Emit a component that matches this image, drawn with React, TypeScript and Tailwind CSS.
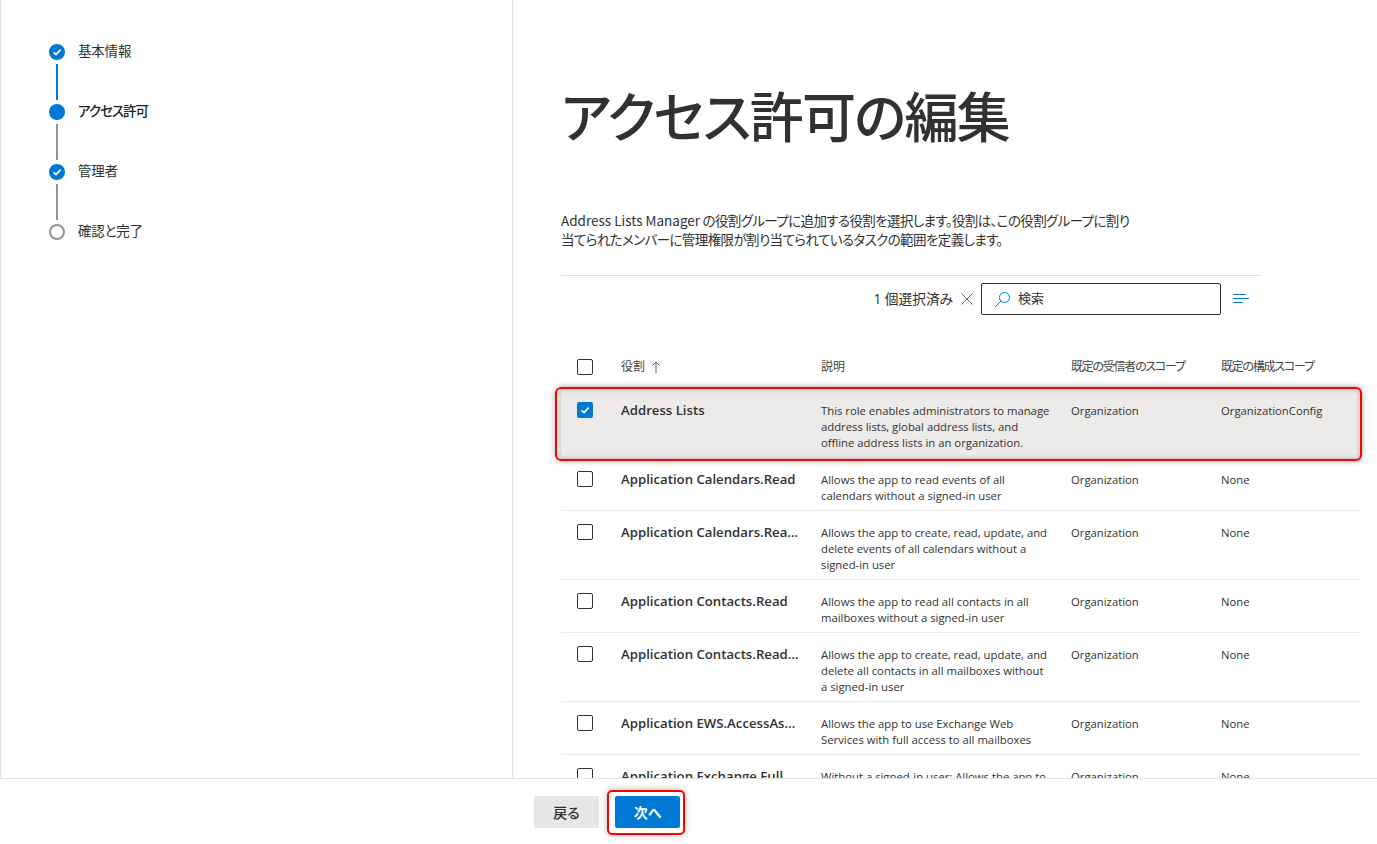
import React from "react";

type Row = { name: string; desc: string[]; conf?: string; selected?: boolean };
const rows: Row[] = [
  { name: "Address Lists", desc: ["This role enables administrators to manage", "address lists, global address lists, and", "offline address lists in an organization."], conf: "OrganizationConfig", selected: true },
  { name: "Application Calendars.Read", desc: ["Allows the app to read events of all", "calendars without a signed-in user"] },
  { name: "Application Calendars.ReadWrite", desc: ["Allows the app to create, read, update, and", "delete events of all calendars without a", "signed-in user"] },
  { name: "Application Contacts.Read", desc: ["Allows the app to read all contacts in all", "mailboxes without a signed-in user"] },
  { name: "Application Contacts.ReadWrite", desc: ["Allows the app to create, read, update, and", "delete all contacts in all mailboxes without", "a signed-in user"] },
  { name: "Application EWS.AccessAsApp", desc: ["Allows the app to use Exchange Web", "Services with full access to all mailboxes"] },
  { name: "Application Exchange Full Access", desc: ["Without a signed-in user: Allows the app to", "have full access"] },
];

function Check({ size = 10 }: { size?: number }) {
  return (
    <svg width={size} height={size} viewBox="0 0 10 10" fill="none">
      <path d="M1.5 5.3 L4 7.6 L8.6 2.6" stroke="white" strokeWidth="1.6" />
    </svg>
  );
}

function Step({ label, state, active, tight }: { label: string; state: "done" | "current" | "todo"; active?: boolean; tight?: boolean }) {
  return (
    <div className="flex items-center h-4">
      {state === "todo" ? (
        <span className="w-4 h-4 rounded-full border-2 border-[#949494] bg-white" />
      ) : (
        <span className="w-4 h-4 rounded-full bg-[#0078d4] flex items-center justify-center">
          {state === "done" && <Check />}
        </span>
      )}
      <span className={`ml-[13px] -mt-[2px] text-[13.5px] leading-4 ${tight ? "tracking-[-1px]" : "tracking-[-0.2px]"} ${active ? "text-[#201f1e] font-medium" : "text-[#323130]"}`}>{label}</span>
    </div>
  );
}

function Connector({ blue }: { blue?: boolean }) {
  return <div className={`ml-[7px] my-1 w-[2px] h-9 ${blue ? "bg-[#0078d4]" : "bg-[#949494]"}`} />;
}

function Box({ checked }: { checked?: boolean }) {
  return checked ? (
    <span className="w-4 h-4 rounded-[2px] bg-[#0078d4] flex items-center justify-center"><Check /></span>
  ) : (
    <span className="block w-4 h-4 rounded-[2px] border border-[#323130] bg-white" />
  );
}

export default function App() {
  return (
    <div className="relative w-[1377px] h-[844px] overflow-hidden bg-white flex flex-col text-[#323130] font-['Open_Sans','Noto_Sans_CJK_JP',sans-serif] [font-feature-settings:'palt']">
      <div className="flex-1 min-h-0 flex">
        <aside className="w-[513px] shrink-0 border-l border-r border-[#e1e1e1] pl-[48px] pt-[44px]">
          <Step label="基本情報" state="done" />
          <Connector blue />
          <Step label="アクセス許可" state="current" active tight />
          <Connector />
          <Step label="管理者" state="done" />
          <Connector />
          <Step label="確認と完了" state="todo" />
        </aside>
        <main className="flex-1 min-w-0 overflow-hidden pl-[48px]">
          <h1 className="mt-[78px] h-[74px] text-[54px] leading-[74px] tracking-[-1.8px] font-medium text-[#323130] font-['Noto_Sans_CJK_JP',sans-serif] whitespace-nowrap">アクセス許可の編集</h1>
          <p className="mt-[59px] w-[600px] text-[13.5px] leading-[19px] tracking-[-0.6px] text-[#323130] font-['Noto_Sans_CJK_JP',sans-serif] whitespace-nowrap">
            <span className="tracking-normal">Address Lists Manager</span> の役割グループに追加する役割を選択します。役割は、この役割グループに割り<br />
            当てられたメンバーに管理権限が割り当てられているタスクの範囲を定義します。
          </p>
          <div className="mt-[26px] w-[700px] border-t border-[#e1dfdd] h-[40px] pt-[7px] flex items-center justify-end">
            <span className="text-[13.7px] mr-2 whitespace-nowrap">1 個選択済み</span>
            <svg width="12" height="12" viewBox="0 0 12 12" className="mr-2" fill="none"><path d="M0.5 0.5 L11.5 11.5 M11.5 0.5 L0.5 11.5" stroke="#605e5c" strokeWidth="1" /></svg>
            <div className="w-[240px] h-[32px] border border-[#323130] rounded-[2px] flex items-center pl-[12px] text-[13px]">
              <svg width="17" height="17" viewBox="0 0 17 17" fill="none"><circle cx="10.5" cy="6.5" r="5" stroke="#0078d4" strokeWidth="1" /><path d="M7 10 L1 16" stroke="#0078d4" strokeWidth="1" /></svg>
              <span className="ml-[7px]">検索</span>
            </div>
            <svg width="16" height="10" viewBox="0 0 16 10" className="ml-3 mr-[12px]" fill="none"><path d="M0 0.5 H13 M0 4.5 H16 M0 8.5 H10" stroke="#0078d4" strokeWidth="1" /></svg>
          </div>
          <div className="mt-[36px] w-[799px]">
            <div className="flex items-center h-[32px] mb-[6px] text-[12px] text-[#484644]">
              <div className="w-[60px] pl-4"><Box /></div>
              <div className="w-[200px] flex items-center">役割<svg width="10" height="12" viewBox="0 0 10 12" className="ml-[6px]" fill="none"><path d="M5 12 V1 M1.5 4.5 L5 1 L8.5 4.5" stroke="#605e5c" strokeWidth="1" /></svg></div>
              <div className="w-[250px]">説明</div>
              <div className="w-[150px] whitespace-nowrap tracking-[-1.25px]">既定の受信者のスコープ</div>
              <div className="whitespace-nowrap tracking-[-1.25px]">既定の構成スコープ</div>
            </div>
            {rows.map((r) => (
              <div key={r.name} className={r.selected ? "flex pt-[12px] h-[69px] bg-[#edebe9] shadow-[0_0_5px_rgba(0,0,0,0.3)]" : "flex pt-[12px] pb-[6px] border-b border-[#edebe9]"}>
                <div className="w-[60px] pl-4 pt-[1px]"><Box checked={r.selected} /></div>
                <div className="w-[200px] pr-[22px] truncate h-[18px] text-[13.2px] leading-[18px] font-semibold text-[#323130]">{r.name}</div>
                <div className="w-[250px] pt-[2px] text-[11.3px] leading-[16px] whitespace-nowrap">
                  {r.desc.map((d) => <div key={d}>{d}</div>)}
                </div>
                <div className="w-[150px] pt-[1px] text-[11.3px] leading-[18px]">Organization</div>
                <div className="pt-[1px] text-[11.3px] leading-[18px]">{r.conf ?? "None"}</div>
              </div>
            ))}
          </div>
        </main>
      </div>
      <footer className="relative h-[66px] shrink-0 border-t border-[#e1e1e1] bg-white flex items-start pt-[17px] pl-[534px] gap-4">
        <button className="w-[65px] h-8 rounded-[2px] bg-[#e6e6e6] text-[14px] font-medium text-[#323130]">戻る</button>
        <button className="w-[65px] h-8 rounded-[2px] bg-[#0078d4] text-[14px] font-semibold text-white">次へ</button>
        <span className="absolute left-[607px] top-[11px] w-[78px] h-[45px] rounded-[5px] border-2 border-[#ff0000] shadow-[0_0_6px_rgba(0,0,0,0.3)]" />
      </footer>
      <span className="absolute left-[555px] top-[387px] w-[807px] h-[74px] rounded-[6px] border-2 border-[#ff0000] shadow-[0_0_6px_rgba(0,0,0,0.3),inset_0_0_5px_rgba(0,0,0,0.25)]" />
    </div>
  );
}
